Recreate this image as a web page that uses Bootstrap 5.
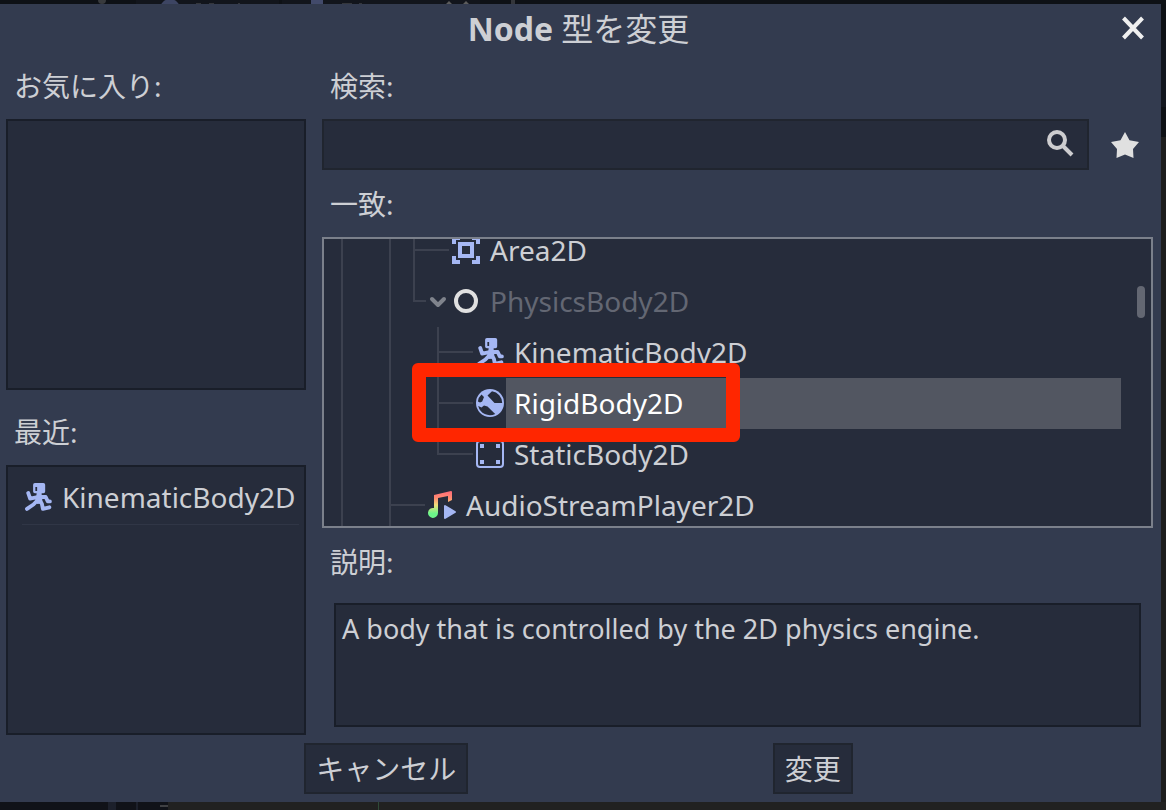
<!DOCTYPE html>
<html lang="ja">
<head>
<meta charset="utf-8">
<meta name="viewport" content="width=device-width, initial-scale=1">
<title>Node 型を変更</title>
<link href="https://cdn.jsdelivr.net/npm/bootstrap@5.3.0/dist/css/bootstrap.min.css" rel="stylesheet">
<style>
  :root { --panel: #262c3b; --edge: #191e29; --ink: #cdcfd4; --guide: #3c414f; --icon: #a5b7f3; }
  body {
    font: 28px/40px "Noto Sans", "Noto Sans CJK JP", sans-serif;
    color: var(--ink);
    background: linear-gradient(#0d1015 40px, #12161e 40px 107px, #0d1015 107px 137px, #1d1d1d 137px);
  }
  .backdrop-top { height: 4px; background: #0e1116; }
  .backdrop-bottom { height: 8px; background: #212121; }
  .backdrop-top svg, .backdrop-bottom svg { display: block; }
  .dialog { background: #333b4f; margin-right: 5px; min-height: 0; }
  .dialog-main { min-height: 0; padding: 0 8px 0 6px; }
  .titlebar { height: 48px; padding: 3px 4px 0 0; }
  .titlebar h1 { font-size: 32px; line-height: 44px; }
  .title-ja { font-weight: 400; }
  .close-btn { right: 16px; top: 12px; }
  .flat-btn { background: none; border: 0; padding: 0; line-height: 0; color: #e0e0e0; }
  .side { width: 300px; }
  .caption { height: 67px; line-height: 66px; padding: 1px 0 0 8px; }
  .panel { background: var(--panel); border: 2px solid var(--edge); }
  .side .panel { flex: 1 1 0; }
  .search-box { background: var(--panel); border: 2px solid #20252f; height: 51px; color: var(--ink); border-radius: 0; font-size: 28px; padding: 0 56px 0 12px; }
  .search-box:focus { background: var(--panel); color: var(--ink); }
  .search-icon { right: 14px; top: 9px; }
  .fav-btn { width: 56px; }
  .tree { background: var(--panel); border: 2px solid #7b808b; flex: 1 1 0; min-height: 0; }
  .tree ul { margin-top: -14px; }
  .tree-row { height: 51px; padding-left: 17px; }
  .g { width: 24px; flex: none; }
  .g-bar { border-left: 2px solid var(--guide); }
  .g-tee, .g-end { width: 36px; margin-right: 3px; flex: none; border-left: 2px solid var(--guide); background: linear-gradient(var(--guide), var(--guide)) 0 24px / 100% 2px no-repeat; }
  .g-end { height: 26px; align-self: flex-start; }
  .g-short { width: 13px; margin-right: 3px; }
  .tree-row svg { flex: none; margin-top: 11px; }
  .tree-row .twisty { margin: 15px 3px 0 0; }
  .tree-text { line-height: 51px; padding-left: 8px; margin-left: 2px; flex: 1; }
  .muted { color: #636773; }
  .picked { background: #525661; color: #fff; }
  .marker { left: 88px; top: -15px; width: 328px; height: 79px; border: 14px solid #ff2600; border-radius: 6px; z-index: 2; pointer-events: none; }
  .track { width: 30px; flex: none; padding: 47px 6px 0 16px; }
  .thumb { height: 32px; border-radius: 4px; background: #636772; }
  .recent-item { height: 54px; margin: 4px 5px 0 14px; padding-left: 2px; border-bottom: 1px solid #303646; }
  .recent-item a { color: inherit; text-decoration: none; gap: 10px; }
  .about { height: 124px; margin: 8px 12px 8px; padding: 4px 6px; font-size: 27px; }
  .actions { padding: 8px 4px 8px 0; }
  .act { background: var(--panel); border: 2px solid #20252f; border-radius: 0; color: var(--ink); font-size: 28px; line-height: 40px; height: 51px; padding: 0 10px; }
</style>
</head>
<body class="d-flex flex-column vh-100 overflow-hidden">

<svg width="0" height="0" class="position-absolute" aria-hidden="true">
  <defs>
    <symbol id="runner" viewBox="0 0 16 16">
      <path fill="#a5b7f3" fill-rule="evenodd" d="M6.200 0h4.900a1 1 0 0 1 1 1v3.900a1 1 0 0 1-1 1H6.200a1 1 0 0 1-1-1V1a1 1 0 0 1 1-1zM6.500 2.300v2.300h1V2.300z"/>
      <path fill="#a5b7f3" d="M7.300 5h2.800v2l.6 4.500-3 .5-1.500-1 .8-3z"/>
      <path fill="none" stroke="#a5b7f3" stroke-width="2.200" stroke-linecap="round" stroke-linejoin="round" d="M2.400 5.700l1.100 3.200 4.200-.8M9 8h3.400l1.200 2.500h1.200M7.600 10L5.400 12.300 1.700 14.800M8.800 10l1.400 1.800.6 3 3.700-.9"/>
    </symbol>
  </defs>
</svg>

<div class="backdrop-top flex-shrink-0" aria-hidden="true">
  <svg width="600" height="4"><rect x="136" width="143" height="4" fill="#12151c"/><rect x="282" width="198" height="4" fill="#12151c"/><circle cx="102" r="4" fill="#383a3d"/><circle cx="170" cy="9" r="10" fill="#3d4563"/><path fill="#424a6b" d="M311 0h12v4h-12z"/><path fill="#34363b" d="M196 3h5v1h-5zM209 3h5v1h-5zM238 3h2v1h-2zM342 3h10v1h-10zM359 3h3v1h-3zM511 0h4v4h-4z"/><path fill="#5c5c5c" d="M446 4l3-3 3 3zM463 4l3-3 3 3z"/></svg>
</div>

<main class="dialog d-flex flex-column flex-grow-1" role="dialog" aria-labelledby="dlg-title">
  <header class="titlebar position-relative text-center flex-shrink-0">
    <h1 id="dlg-title" class="fw-bold m-0">Node <span class="title-ja">型を変更</span></h1>
    <button type="button" class="flat-btn close-btn position-absolute" aria-label="閉じる">
      <svg width="24" height="24" viewBox="0 0 24 24"><path d="M2.500 2l19 20M21.500 2l-19 20" stroke="#f0f0f0" stroke-width="4"/></svg>
    </button>
  </header>

  <div class="dialog-main d-flex flex-grow-1 gap-3">
    <aside class="side d-flex flex-column flex-shrink-0">
      <div class="caption flex-shrink-0">お気に入り:</div>
      <div class="panel mb-2"></div>
      <div class="caption flex-shrink-0">最近:</div>
      <div class="panel">
        <ul class="list-unstyled m-0">
          <li class="recent-item d-flex align-items-center">
            <a href="#" class="d-flex align-items-center"><svg width="28" height="28"><use href="#runner"/></svg><span>KinematicBody2D</span></a>
          </li>
        </ul>
      </div>
    </aside>

    <section class="d-flex flex-column flex-grow-1">
      <label class="caption flex-shrink-0" for="search">検索:</label>
      <div class="d-flex gap-2 flex-shrink-0">
        <div class="position-relative flex-grow-1">
          <input id="search" type="text" class="form-control search-box">
          <svg class="search-icon position-absolute" width="30" height="30" viewBox="0 0 30 30"><circle cx="12" cy="12" r="8" fill="none" stroke="#cdcdcf" stroke-width="4"/><path d="M17 17l10 10" stroke="#cdcdcf" stroke-width="4"/></svg>
        </div>
        <button type="button" class="flat-btn fav-btn" aria-label="お気に入り">
          <svg width="28" height="28" viewBox="0 0 28 28"><path fill="#e0e0e0" d="M14 1l4.500 8.200L28 11l-6 7L22.500 27 14 23.500 5.500 27l.5-9L0 11l9.500-1.800z"/></svg>
        </button>
      </div>
      <div class="caption flex-shrink-0">一致:</div>
      <div class="tree d-flex overflow-hidden">
        <ul class="list-unstyled flex-grow-1 mb-0" role="tree">
          <li class="tree-row d-flex align-items-start" role="treeitem">
            <span class="g g-bar h-100"></span><span class="g"></span><span class="g g-bar h-100"></span><span class="g-tee h-100"></span>
            <svg width="28" height="28" viewBox="0 0 28 28" fill="#a5b7f3"><path fill-rule="evenodd" d="M0 0h8v4H4v4H0zM20 0h8v8h-4V4h-4zM0 20h4v4h4v4H0zM24 20h4v8h-8v-4h4zM6 6h16v16H6zM10 10v8h8v-8z"/></svg>
            <span class="tree-text">Area2D</span>
          </li>
          <li class="tree-row d-flex align-items-start" role="treeitem" aria-expanded="true">
            <span class="g g-bar h-100"></span><span class="g"></span><span class="g g-bar h-100"></span><span class="g-end g-short"></span>
            <svg class="twisty" width="20" height="20" viewBox="0 0 20 20"><path d="M3 8l6 6 6-6" fill="none" stroke="#7f838c" stroke-width="4" stroke-linecap="round" stroke-linejoin="round"/></svg>
            <svg width="28" height="28" viewBox="0 0 28 28"><circle cx="14" cy="14" r="10" fill="none" stroke="#e0e0e0" stroke-width="4"/></svg>
            <span class="tree-text muted">PhysicsBody2D</span>
          </li>
          <li class="tree-row d-flex align-items-start" role="treeitem">
            <span class="g g-bar h-100"></span><span class="g"></span><span class="g g-bar h-100"></span><span class="g"></span><span class="g-tee h-100"></span>
            <svg width="28" height="28"><use href="#runner"/></svg>
            <span class="tree-text">KinematicBody2D</span>
          </li>
          <li class="tree-row d-flex align-items-start position-relative" role="treeitem" aria-selected="true">
            <span class="g g-bar h-100"></span><span class="g"></span><span class="g g-bar h-100"></span><span class="g"></span><span class="g-tee h-100"></span>
            <svg width="28" height="28" viewBox="0 0 28 28"><circle cx="14" cy="14" r="14" fill="#a5b7f3"/><path fill="#262c3b" d="M11.500 6.500L16 2.200A12 12 0 0 1 26.200 14H18.500zM1.900 12.500Q2.500 8 5.500 5.500L8 8 6.200 12.500 4 13.500zM2.200 17L5.500 18.500 8 16.500 11.500 17.500 19.200 25A12 12 0 0 1 2.200 17z"/></svg>
            <span class="tree-text picked">RigidBody2D</span>
            <span class="marker position-absolute"></span>
          </li>
          <li class="tree-row d-flex align-items-start" role="treeitem">
            <span class="g g-bar h-100"></span><span class="g"></span><span class="g g-bar h-100"></span><span class="g"></span><span class="g-end"></span>
            <svg width="28" height="28" viewBox="0 0 28 28"><rect x="1" y="1" width="26" height="26" rx="3" fill="none" stroke="#a5b7f3" stroke-width="2"/><path fill="#a5b7f3" d="M4 4h4v4H4zM20 4h4v4h-4zM4 20h4v4H4zM20 20h4v4h-4z"/></svg>
            <span class="tree-text">StaticBody2D</span>
          </li>
          <li class="tree-row d-flex align-items-start" role="treeitem">
            <span class="g g-bar h-100"></span><span class="g"></span><span class="g-tee h-100"></span>
            <svg width="28" height="28" viewBox="0 0 28 28">
              <defs><linearGradient id="note" x1="0" y1="0" x2="0" y2="28" gradientUnits="userSpaceOnUse"><stop stop-color="#ff6b7a"/><stop offset=".25" stop-color="#ff8a70"/><stop offset=".5" stop-color="#f2e07a"/><stop offset=".8" stop-color="#6cf58a"/></linearGradient></defs>
              <path fill="url(#note)" d="M6 4L23 0q1 0 1 1v8l-4 2V5L10 7v15a5 5 0 1 1-4-5z"/><path fill="#a5b7f3" stroke="#a5b7f3" stroke-width="2" stroke-linejoin="round" d="M17 15v12l10-6z"/>
            </svg>
            <span class="tree-text">AudioStreamPlayer2D</span>
          </li>
        </ul>
        <div class="track"><div class="thumb"></div></div>
      </div>
      <div class="caption flex-shrink-0">説明:</div>
      <div class="panel about flex-shrink-0">A body that is controlled by the 2D physics engine.</div>
    </section>
  </div>

  <footer class="actions d-flex justify-content-evenly flex-shrink-0">
    <button type="button" class="btn act">キャンセル</button>
    <button type="button" class="btn act">変更</button>
  </footer>
</main>

<div class="backdrop-bottom flex-shrink-0" aria-hidden="true">
  <svg width="400" height="8"><path fill="#101218" d="M0 0h168v8H0z"/><path fill="#1c202b" d="M108 0h8v8h-8zM136 0h2v8h-2z"/><path fill="#3f4043" d="M160 3h8v2h-8z"/><path fill="#2f4a38" d="M378 0h1v8h-1z"/></svg>
</div>

<script src="https://cdn.jsdelivr.net/npm/bootstrap@5.3.0/dist/js/bootstrap.bundle.min.js"></script>
</body>
</html>
